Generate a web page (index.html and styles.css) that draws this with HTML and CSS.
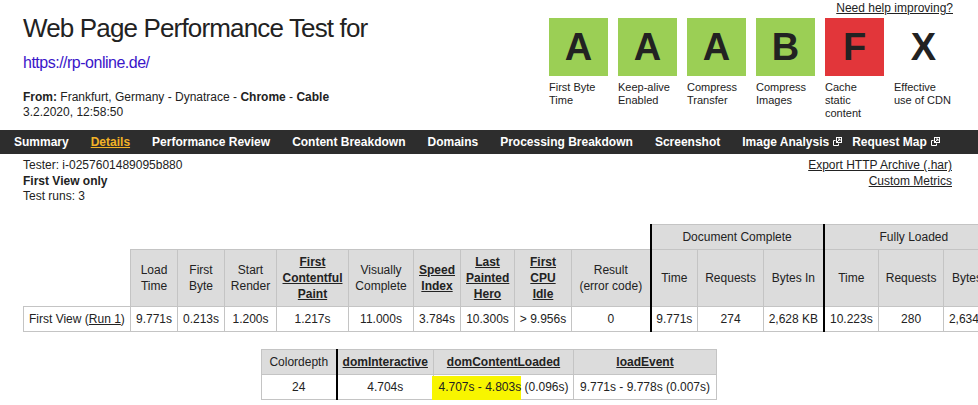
FILE: index.html
```html
<!DOCTYPE html>
<html>
<head>
<meta charset="utf-8">
<title>WebPageTest</title>
<link rel="stylesheet" href="styles.css">
</head>
<body>
<header class="top">
  <div class="title-block">
    <h1 class="title">Web Page Performance Test for</h1>
    <a class="url" href="#">https://rp-online.de/</a>
    <div class="from"><b>From:</b> Frankfurt, Germany - Dynatrace - <b>Chrome</b> - <b>Cable</b></div>
    <div class="date">3.2.2020, 12:58:50</div>
  </div>
  <div class="grades-block">
    <a class="help" href="#">Need help improving?</a>
    <div class="grades">
      <div class="grade"><div class="box good">A</div><div class="label">First Byte Time</div></div>
      <div class="grade"><div class="box good">A</div><div class="label">Keep-alive Enabled</div></div>
      <div class="grade"><div class="box good">A</div><div class="label">Compress Transfer</div></div>
      <div class="grade"><div class="box good">B</div><div class="label">Compress Images</div></div>
      <div class="grade"><div class="box bad">F</div><div class="label">Cache static content</div></div>
      <div class="grade"><div class="box none">X</div><div class="label">Effective use of CDN</div></div>
    </div>
  </div>
</header>

<nav class="nav">
  <a href="#">Summary</a>
  <a href="#" class="active">Details</a>
  <a href="#">Performance Review</a>
  <a href="#">Content Breakdown</a>
  <a href="#">Domains</a>
  <a href="#">Processing Breakdown</a>
  <a href="#">Screenshot</a>
  <a href="#" class="ext">Image Analysis<svg class="ext-icon" width="9" height="9" viewBox="0 0 9 9"><path d="M2.5 3.5H0.5V8.5H5.5V6.5" fill="none" stroke="#fff"/><rect x="3.5" y="0.5" width="5" height="5" fill="none" stroke="#fff"/><path d="M3.5 5.5L7 2M5 2H7V4" fill="none" stroke="#fff"/></svg></a>
  <a href="#" class="ext">Request Map<svg class="ext-icon" width="9" height="9" viewBox="0 0 9 9"><path d="M2.5 3.5H0.5V8.5H5.5V6.5" fill="none" stroke="#fff"/><rect x="3.5" y="0.5" width="5" height="5" fill="none" stroke="#fff"/><path d="M3.5 5.5L7 2M5 2H7V4" fill="none" stroke="#fff"/></svg></a>
</nav>

<section class="info">
  <div class="info-left">
    <div>Tester: i-0257601489095b880</div>
    <div><b>First View only</b></div>
    <div>Test runs: 3</div>
  </div>
  <div class="info-right">
    <div><a href="#">Export HTTP Archive (.har)</a></div>
    <div><a href="#">Custom Metrics</a></div>
  </div>
</section>

<table class="results">
  <colgroup>
    <col class="c107"><col class="c47"><col class="c47"><col class="c52"><col class="c72"><col class="c65"><col class="c47"><col class="c54"><col class="c57"><col class="c79"><col class="c47"><col class="c66"><col class="c60"><col class="c55"><col class="c65"><col class="c60">
  </colgroup>
  <tr class="group-row">
    <th class="blank" colspan="10"></th>
    <th class="sep" colspan="3">Document Complete</th>
    <th class="sep" colspan="3">Fully Loaded</th>
  </tr>
  <tr class="head-row">
    <th class="blank"></th>
    <th>Load Time</th>
    <th>First Byte</th>
    <th>Start Render</th>
    <th><a href="#">First Contentful Paint</a></th>
    <th>Visually Complete</th>
    <th><a href="#">Speed Index</a></th>
    <th><a href="#">Last Painted Hero</a></th>
    <th><a href="#">First CPU Idle</a></th>
    <th>Result<br>(error code)</th>
    <th class="sep">Time</th>
    <th>Requests</th>
    <th>Bytes In</th>
    <th class="sep">Time</th>
    <th>Requests</th>
    <th>Bytes In</th>
  </tr>
  <tr class="data-row">
    <td class="first">First View (<a href="#">Run 1</a>)</td>
    <td>9.771s</td>
    <td>0.213s</td>
    <td>1.200s</td>
    <td>1.217s</td>
    <td>11.000s</td>
    <td>3.784s</td>
    <td>10.300s</td>
    <td>&gt; 9.956s</td>
    <td>0</td>
    <td class="sep">9.771s</td>
    <td>274</td>
    <td>2,628 KB</td>
    <td class="sep">10.223s</td>
    <td>280</td>
    <td>2,634 KB</td>
  </tr>
</table>

<table class="timings">
  <colgroup>
    <col class="c75"><col class="c97"><col class="c140"><col class="c143">
  </colgroup>
  <tr class="head-row2">
    <th>Colordepth</th>
    <th class="sep"><a href="#">domInteractive</a></th>
    <th><a href="#">domContentLoaded</a></th>
    <th><a href="#">loadEvent</a></th>
  </tr>
  <tr class="data-row">
    <td>24</td>
    <td class="sep">4.704s</td>
    <td><mark class="hl">4.707s - 4.803s</mark> (0.096s)</td>
    <td>9.771s - 9.778s (0.007s)</td>
  </tr>
</table>
</body>
</html>
```

FILE: styles.css
```css
html, body {
  overflow: hidden;
}
body {
  margin: 0;
  font-family: "Liberation Sans", Arial, sans-serif;
  font-size: 12px;
  color: #222;
  background: #fff;
}
a {
  color: #222;
}

/* Header */
.top {
  display: flex;
  justify-content: space-between;
  height: 130px;
  padding: 0 25px 0 23px;
}
.title {
  margin: 12px 0 0;
  font-size: 26px;
  line-height: 32px;
  font-weight: normal;
  letter-spacing: -0.85px;
  color: #222;
}
.url {
  display: block;
  margin-top: 9px;
  font-size: 16px;
  line-height: 20px;
  letter-spacing: -0.5px;
  color: #3a16c9;
  text-decoration: none;
}
.from {
  margin-top: 17px;
  line-height: 15px;
}
.date {
  line-height: 15px;
}

.grades-block {
  width: 404px;
  display: flex;
  flex-direction: column;
  align-items: flex-end;
}
.help {
  margin-top: 1px;
  line-height: 14px;
}
.grades {
  display: flex;
  gap: 10px;
  margin-top: 3px;
}
.grade {
  width: 59px;
}
.box {
  height: 58px;
  line-height: 58px;
  text-align: center;
  font-size: 38px;
  font-weight: bold;
  color: #222;
}
.good { background: #9bcf55; }
.bad { background: #e2363a; }
.none { background: transparent; }
.label {
  margin-top: 5px;
  font-size: 11px;
  line-height: 13px;
}

/* Nav */
.nav {
  display: flex;
  gap: 22px;
  height: 24px;
  padding-left: 14px;
  background: #2d2d2d;
  align-items: center;
}
.nav a {
  color: #fff;
  font-weight: bold;
  font-size: 12px;
  text-decoration: none;
  white-space: nowrap;
}
.nav a.active {
  color: #f2b327;
  text-decoration: underline;
}
.nav a.ext {
  display: flex;
  align-items: center;
  margin-right: -12px;
}
.ext-icon {
  margin-left: 4px;
  margin-top: -2px;
}

/* Info */
.info {
  display: flex;
  justify-content: space-between;
  padding: 4px 26px 0 23px;
  line-height: 15.5px;
}
.info-right {
  text-align: right;
}

/* Tables */
table {
  border-collapse: collapse;
  table-layout: fixed;
}
th, td {
  border: 1px solid #c4c4c4;
  padding: 0 5px;
  text-align: center;
  font-size: 12px;
  line-height: 16px;
  color: #222;
}
th {
  background: #dcdcdc;
  font-weight: normal;
}
th a {
  font-weight: bold;
}
th.blank {
  background: transparent;
  border: none;
}
.sep {
  border-left: 2px solid #000;
}

.results {
  width: 980px;
  margin: 19px 0 0 23px;
}
.group-row th { height: 24px; }
.head-row th { height: 56px; }
.data-row td { height: 24px; white-space: nowrap; padding: 0 3px; }
td.first {
  text-align: left;
  padding-left: 5px;
}

.c107 { width: 107px; }
.c47 { width: 47px; }
.c52 { width: 52px; }
.c72 { width: 72px; }
.c65 { width: 65px; }
.c54 { width: 54px; }
.c57 { width: 57px; }
.c79 { width: 79px; }
.c66 { width: 66px; }
.c60 { width: 60px; }
.c55 { width: 55px; }
.c75 { width: 75px; }
.c97 { width: 97px; }
.c140 { width: 140px; }
.c143 { width: 143px; }

.timings {
  width: 455px;
  margin: 17px auto 0;
}
.head-row2 th { height: 24px; }
.hl {
  background: #f8f500;
  color: #222;
  padding: 4px 0 6px 6px;
  margin-left: -6px;
}
```
